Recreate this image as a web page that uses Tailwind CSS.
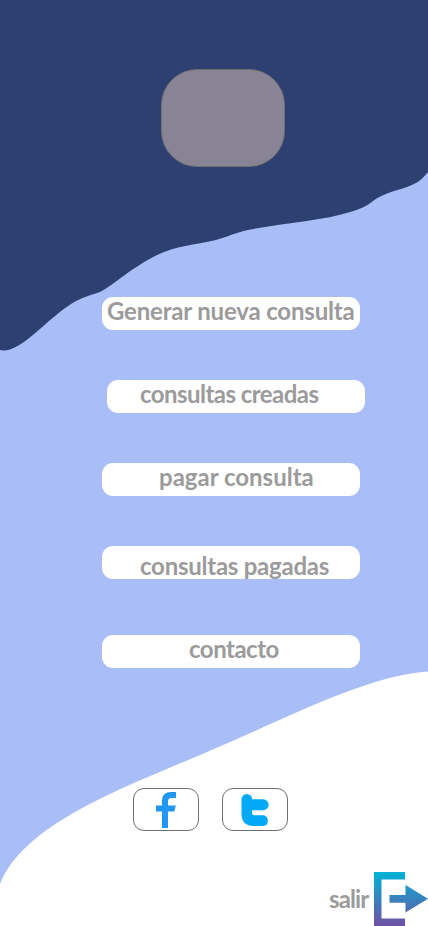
<!DOCTYPE html>
<html lang="es">
<head>
<meta charset="utf-8">
<meta name="viewport" content="width=device-width, initial-scale=1">
<title>Consultas</title>
<script src="https://cdn.jsdelivr.net/npm/@tailwindcss/browser@4"></script>
</head>
<body class="bg-white">
<div class="relative isolate flex h-[926px] w-[428px] flex-col overflow-hidden font-['Lato',sans-serif] text-2xl/[24px] font-bold text-[#9b9b9b]">
  <svg class="absolute inset-0 -z-10" width="428" height="926" viewBox="0 0 428 926" aria-hidden="true">
    <rect width="428" height="926" fill="#a9bdf6"/>
    <path fill="#2d4071" d="M0 0H428V172C424 177 419 182 413 184.500C406 188 398 189.500 391 192C384 194.500 378 197 373 201C367 206 360 209 352 211.500C322 221 283 223 248 230C236 232.500 227 237 216 240C194 245 176 246 157 255C131 268 115 284 100 292C92 295 84 296 71 304C46 320 22 351 3 350.500L0 350Z"/>
    <path fill="#fff" d="M0 884C13 850 51 825 84 807C126 785 165 770 214 749C285 719 365 676 428 671.500V926H0Z"/>
  </svg>
  <header class="pt-[69px] pl-[161px]">
    <div class="h-[98px] w-[124px] rounded-[36px] border border-[#707070] bg-[#888496]"></div>
  </header>
  <nav class="flex flex-col pt-[130px] pl-[102px] whitespace-nowrap">
    <a class="h-[33px] w-[258px] rounded-[11px] bg-white pt-0.5 pl-[5px]"><span class="block tracking-[-0.18px]">Generar nueva consulta</span></a>
    <a class="mt-[50px] ml-[5px] h-[33px] w-[258px] rounded-[11px] bg-white pt-0.5 pl-[33px]"><span class="block tracking-[-0.55px]">consultas creadas</span></a>
    <a class="mt-[50px] h-[33px] w-[258px] rounded-[11px] bg-white pt-0.5 pl-[57px]"><span class="block">pagar consulta</span></a>
    <a class="mt-[50px] h-[33px] w-[258px] rounded-[11px] bg-white pt-2 pl-[38px]"><span class="block tracking-[-0.25px]">consultas pagadas</span></a>
    <a class="mt-[56px] h-[33px] w-[258px] rounded-[11px] bg-white pt-0.5 pl-[87px]"><span class="block tracking-[-0.5px]">contacto</span></a>
  </nav>
  <div class="flex gap-[23px] pt-[120px] pl-[133px]">
    <a class="h-[43px] w-[66px] rounded-[11px] border border-[#707070] bg-white" aria-label="Facebook">
      <svg class="block" width="64" height="41" viewBox="134 789 64 41"><path fill="#2196f3" d="M162 828V811.500H156V805.500H162V801C162 795 165.500 792 171 792H176V798H172C169 798 168 799 168 802V805.500H175.800L174.300 811.500H168V828Z"/></svg>
    </a>
    <a class="h-[43px] w-[66px] rounded-[11px] border border-[#707070] bg-white" aria-label="Twitter">
      <svg class="block" width="64" height="41" viewBox="223 789 64 41"><path fill="#03a9f4" d="M241.500 799.300A5.300 5.300 0 0 1 252.200 799.300H263.200A5.400 5.400 0 0 1 263.200 810.200H252V813Q252 815.300 254.300 815.300H263.200A5.400 5.400 0 0 1 263.200 826H253.500C246 826 241.500 821.500 241.500 814.500Z"/></svg>
    </a>
  </div>
  <footer class="flex pt-[41px] pl-[329px]">
    <span class="w-[45px] pt-[15px] tracking-[-0.9px]">salir</span>
    <svg class="block shrink-0" width="54" height="54" viewBox="0 0 54 54" aria-hidden="true">
      <defs><linearGradient id="exitGradient" gradientUnits="userSpaceOnUse" x1="0" y1="0" x2="0" y2="54"><stop stop-color="#00b4d5"/><stop offset="1" stop-color="#7050a5"/></linearGradient></defs>
      <path fill="url(#exitGradient)" d="M0 0H31V7.500H7.500V46.500H31V54H0ZM15.500 23H31.500V13L54 26.800L31.500 40.500V30.700H15.500Z"/>
    </svg>
  </footer>
</div>
</body>
</html>
